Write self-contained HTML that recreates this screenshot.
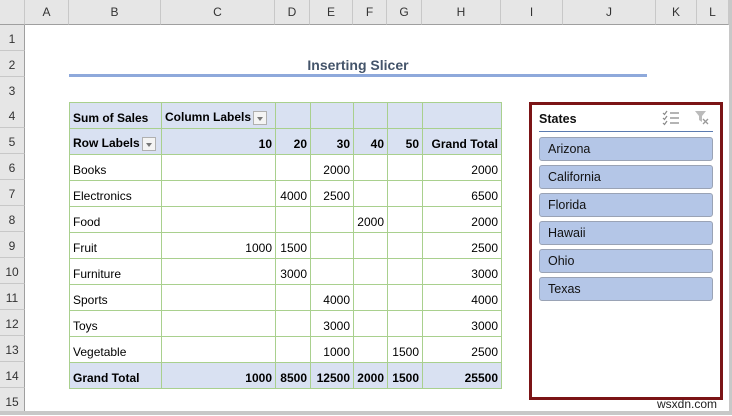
<!DOCTYPE html>
<html><head><meta charset="utf-8"><style>
*{margin:0;padding:0;box-sizing:border-box}
body{width:732px;height:415px;overflow:hidden;background:#fff;font-family:"Liberation Sans",Arial,sans-serif;position:relative}
.a{position:absolute}
.ch{position:absolute;top:0;height:25px;background:#e6e6e6;border-right:1px solid #c8c8c8;border-bottom:1px solid #9f9f9f;font-size:12px;color:#333;text-align:center;line-height:25px}
.rh{position:absolute;left:0;width:25px;height:26px;background:#e6e6e6;border-bottom:1px solid #c8c8c8;border-right:1px solid #9f9f9f;font-size:12px;color:#333;text-align:center;line-height:28px}
table{position:absolute;left:69px;top:102px;width:432px;table-layout:fixed;border-collapse:collapse;font-size:12px;color:#000}
td{border:1px solid #a9d08e;height:26px;padding:0 3px 3px 3px;white-space:nowrap;overflow:visible;text-align:right;vertical-align:bottom}
td.l{text-align:left}
tr.h td{background:#d9e1f2;font-weight:bold}
.dd{display:inline-block;width:14px;height:14px;border:1px solid #b0b0b0;background:#f4f4f4;vertical-align:middle;margin-left:2px;position:relative}
.dd:after{content:"";position:absolute;left:3px;top:5px;border-left:3.5px solid transparent;border-right:3.5px solid transparent;border-top:4px solid #777}
.it{position:absolute;left:539px;width:174px;height:24px;background:#b4c6e7;border:1px solid #9aa3b5;border-radius:3px;font-size:12.5px;line-height:23px;padding-left:8px;color:#111}
</style></head><body>
<div class="ch" style="left:0;width:25px"></div>
<div class="ch" style="left:25px;width:44px">A</div>
<div class="ch" style="left:69px;width:92px">B</div>
<div class="ch" style="left:161px;width:114px">C</div>
<div class="ch" style="left:275px;width:35px">D</div>
<div class="ch" style="left:310px;width:43px">E</div>
<div class="ch" style="left:353px;width:34px">F</div>
<div class="ch" style="left:387px;width:35px">G</div>
<div class="ch" style="left:422px;width:79px">H</div>
<div class="ch" style="left:501px;width:62px">I</div>
<div class="ch" style="left:563px;width:93px">J</div>
<div class="ch" style="left:656px;width:41px">K</div>
<div class="ch" style="left:697px;width:32px">L</div>
<div class="a" style="left:729px;top:0;width:3px;height:415px;background:#c8c8c8"></div>
<div class="rh" style="top:25px">1</div>
<div class="rh" style="top:51px">2</div>
<div class="rh" style="top:77px">3</div>
<div class="rh" style="top:102px">4</div>
<div class="rh" style="top:128px">5</div>
<div class="rh" style="top:154px">6</div>
<div class="rh" style="top:180px">7</div>
<div class="rh" style="top:206px">8</div>
<div class="rh" style="top:232px">9</div>
<div class="rh" style="top:258px">10</div>
<div class="rh" style="top:284px">11</div>
<div class="rh" style="top:310px">12</div>
<div class="rh" style="top:336px">13</div>
<div class="rh" style="top:362px">14</div>
<div class="rh" style="top:388px">15</div>
<div class="a" style="left:0;top:411px;width:732px;height:4px;background:#c8c8c8"></div>
<div class="a" style="left:69px;top:57px;width:578px;text-align:center;font-size:14px;font-weight:bold;color:#44546a">Inserting Slicer</div>
<div class="a" style="left:69px;top:74px;width:578px;height:3px;background:#8ea9db"></div>
<table>
<colgroup><col style="width:92px"><col style="width:114px"><col style="width:35px"><col style="width:43px"><col style="width:34px"><col style="width:35px"><col style="width:79px"></colgroup>
<tr class="h"><td class="l">Sum of Sales</td><td class="l">Column Labels<span class="dd"></span></td><td></td><td></td><td></td><td></td><td></td></tr>
<tr class="h"><td class="l">Row Labels<span class="dd"></span></td><td>10</td><td>20</td><td>30</td><td>40</td><td>50</td><td>Grand Total</td></tr>
<tr><td class="l">Books</td><td></td><td></td><td>2000</td><td></td><td></td><td>2000</td></tr>
<tr><td class="l">Electronics</td><td></td><td>4000</td><td>2500</td><td></td><td></td><td>6500</td></tr>
<tr><td class="l">Food</td><td></td><td></td><td></td><td>2000</td><td></td><td>2000</td></tr>
<tr><td class="l">Fruit</td><td>1000</td><td>1500</td><td></td><td></td><td></td><td>2500</td></tr>
<tr><td class="l">Furniture</td><td></td><td>3000</td><td></td><td></td><td></td><td>3000</td></tr>
<tr><td class="l">Sports</td><td></td><td></td><td>4000</td><td></td><td></td><td>4000</td></tr>
<tr><td class="l">Toys</td><td></td><td></td><td>3000</td><td></td><td></td><td>3000</td></tr>
<tr><td class="l">Vegetable</td><td></td><td></td><td>1000</td><td></td><td>1500</td><td>2500</td></tr>
<tr class="h"><td class="l">Grand Total</td><td>1000</td><td>8500</td><td>12500</td><td>2000</td><td>1500</td><td>25500</td></tr>
</table>
<div class="a" style="left:529px;top:102px;width:194px;height:298px;border:3px solid #7b1416;background:#fff"></div>
<div class="a" style="left:539px;top:112px;font-size:12.5px;font-weight:bold;color:#111">States</div>
<svg class="a" style="left:662px;top:110px" width="18" height="16" viewBox="0 0 18 16"><g stroke="#888" stroke-width="1.2" fill="none"><path d="M1 3l1.5 1.5L5 1M1 8l1.5 1.5L5 6M1 13l1.5 1.5L5 11"/><path d="M8 3h9M8 8h9M8 13h9"/></g></svg>
<svg class="a" style="left:694px;top:110px" width="16" height="16" viewBox="0 0 16 16"><path d="M1 1h11L8 6v6L5 10V6z" fill="#bbb"/><path d="M9 9l5 5M14 9l-5 5" stroke="#999" stroke-width="1.3"/></svg>
<div class="a" style="left:539px;top:131px;width:174px;height:1px;background:#5b7bb0"></div>
<div class="it" style="top:137px">Arizona</div>
<div class="it" style="top:165px">California</div>
<div class="it" style="top:193px">Florida</div>
<div class="it" style="top:221px">Hawaii</div>
<div class="it" style="top:249px">Ohio</div>
<div class="it" style="top:277px">Texas</div>
<div class="a" style="left:657px;top:397px;font-size:12px;color:#222">wsxdn.com</div>
</body></html>
